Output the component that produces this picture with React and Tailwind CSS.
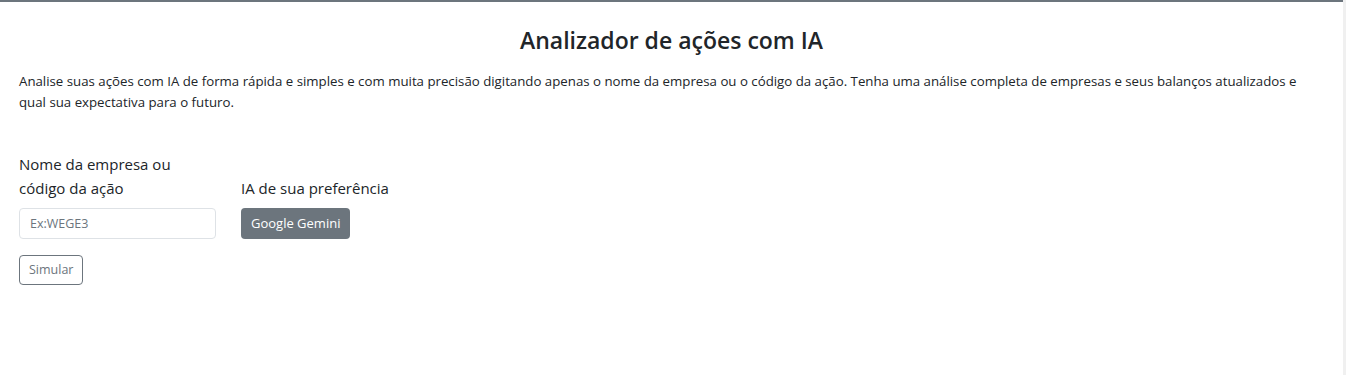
export default function App() {
  return (
    <div className="min-h-[375px] bg-white font-['Open_Sans',sans-serif] text-[#212529]">
      <div className="flex min-h-[375px]">
        <div className="flex-1 border-t-2 border-[#6c757d] px-[19px]">
          <h1 className="mt-[22px] text-center text-[23px] font-semibold leading-[32px]">
            Analizador de ações com IA
          </h1>
          <p className="mt-[15px] text-[13.25px] leading-[21px]">
            Analise suas ações com IA de forma rápida e simples e com muita precisão digitando apenas o nome da empresa ou o código da ação. Tenha uma análise completa de empresas e seus balanços atualizados e qual sua expectativa para o futuro.
          </p>

          <div className="mt-[39px] flex items-end gap-[25px]">
            <div className="w-[197px]">
              <label className="block text-[15px] leading-[24px]">Nome da empresa ou código da ação</label>
              <input
                type="text"
                placeholder="Ex:WEGE3"
                className="mt-[8px] block h-[31px] w-full rounded-[4px] border border-[#dee2e6] px-[10px] text-[12.5px] placeholder:text-[#6c757d] outline-none"
              />
            </div>
            <div>
              <label className="block text-[15px] leading-[24px]">IA de sua preferência</label>
              <button
                type="button"
                className="mt-[8px] block h-[31px] rounded-[4px] bg-[#6c757d] px-[10px] text-[13px] text-white"
              >
                Google Gemini
              </button>
            </div>
          </div>

          <button
            type="button"
            className="mt-[16px] h-[30px] rounded-[4px] border border-[#6c757d] px-[9px] text-[12.5px] text-[#6c757d]"
          >
            Simular
          </button>
        </div>
        <div className="w-[3px] bg-[#f0f0f0]" />
      </div>
    </div>
  );
}
